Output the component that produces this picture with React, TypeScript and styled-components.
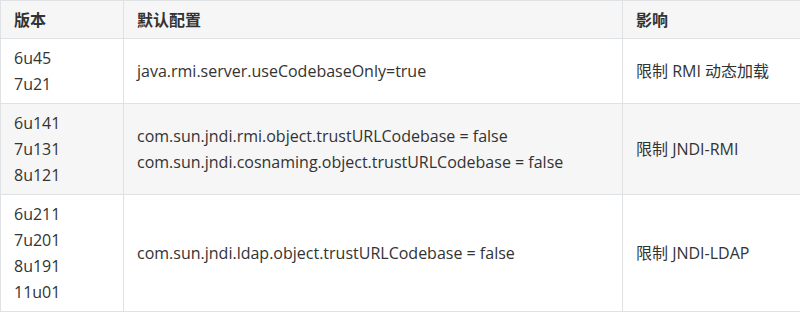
import React from 'react';
import styled, { createGlobalStyle } from 'styled-components';

const GlobalStyle = createGlobalStyle`
  html, body {
    margin: 0;
    padding: 0;
    background: #fff;
  }
  body {
    font-family: 'Open Sans', 'Noto Sans CJK SC', sans-serif;
    color: #333;
  }
`;

const rows = [
  {
    versions: ['6u45', '7u21'],
    configs: ['java.rmi.server.useCodebaseOnly=true'],
    effect: '限制 RMI 动态加载'
  },
  {
    versions: ['6u141', '7u131', '8u121'],
    configs: [
      'com.sun.jndi.rmi.object.trustURLCodebase = false',
      'com.sun.jndi.cosnaming.object.trustURLCodebase = false'
    ],
    effect: '限制 JNDI-RMI'
  },
  {
    versions: ['6u211', '7u201', '8u191', '11u01'],
    configs: ['com.sun.jndi.ldap.object.trustURLCodebase = false'],
    effect: '限制 JNDI-LDAP'
  }
];

function App() {
  return (
    <>
      <GlobalStyle />
      <Table>
        <colgroup>
          <Col $width={123} />
          <Col $width={499} />
          <Col $width={178} />
        </colgroup>
        <thead>
          <HeadRow>
            <HeadCell>版本</HeadCell>
            <HeadCell>默认配置</HeadCell>
            <HeadCell>影响</HeadCell>
          </HeadRow>
        </thead>
        <tbody>
          {rows.map((row, i) => (
            <BodyRow key={i} $striped={i % 2 === 1}>
              <Cell>
                {row.versions.map((v) => (
                  <Line key={v}>{v}</Line>
                ))}
              </Cell>
              <Cell>
                {row.configs.map((c) => (
                  <Line key={c}>{c}</Line>
                ))}
              </Cell>
              <Cell>{row.effect}</Cell>
            </BodyRow>
          ))}
        </tbody>
      </Table>
    </>
  );
}

export default App;

const Table = styled.table`
  width: 800px;
  table-layout: fixed;
  border-collapse: collapse;
  font-size: 16px;
  line-height: 26px;
`;

const Col = styled.col<{ $width: number }>`
  width: ${(p) => p.$width}px;
`;

const HeadRow = styled.tr`
  background: #f6f6f6;
`;

const HeadCell = styled.th`
  border: 1px solid #dfe2e5;
  padding: 6px 13px 5px;
  text-align: left;
  font-weight: 700;
  color: #333;
`;

const BodyRow = styled.tr<{ $striped: boolean }>`
  background: ${(p) => (p.$striped ? '#f6f6f6' : '#fff')};
`;

const Cell = styled.td`
  border: 1px solid #dfe2e5;
  padding: 6px 13px;
  vertical-align: middle;
  color: #333;
`;

const Line = styled.div`
  white-space: nowrap;
`;
